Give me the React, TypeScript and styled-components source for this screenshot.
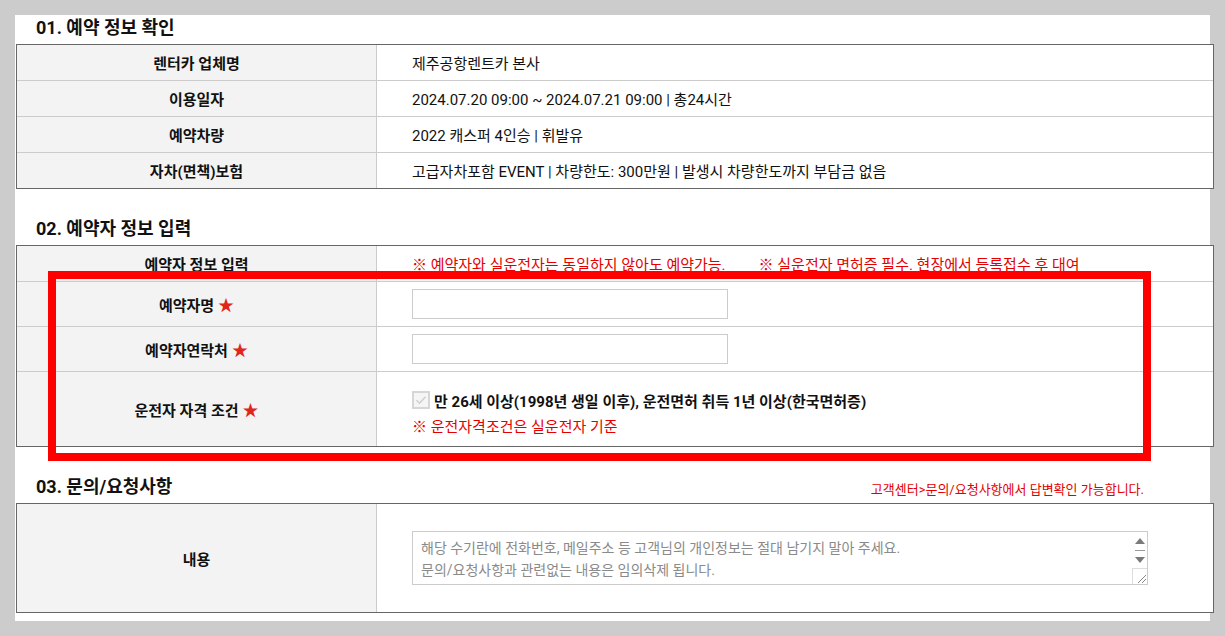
import styled, { createGlobalStyle } from 'styled-components';

const GlobalStyle = createGlobalStyle`
  html, body { margin: 0; padding: 0; }
  body {
    background: #cccccc;
    padding: 15px;
    font-family: Roboto, "Noto Sans CJK KR", sans-serif;
    color: #111;
  }
  * { box-sizing: border-box; }
`;

const Page = styled.div`
  position: relative;
  background: #fff;
  padding-bottom: 8px;
`;

const Section = styled.section`
  & + & { margin-top: 27px; }
`;

const TitleRow = styled.div`
  display: flex;
  align-items: center;
  justify-content: space-between;
  height: 25px;
  margin-bottom: 4px;
  padding: 0 66px 0 21px;
`;

const Title = styled.h2`
  margin: 0;
  font-size: 18px;
  font-weight: 700;
  line-height: 25px;
  color: #111;
`;

const Notice = styled.span`
  font-size: 13px;
  color: #e50000;
  padding-top: 4px;
`;

const Board = styled.div`
  width: 1198px;
  margin-left: 1px;
  border: 1px solid #666;
  background: #fff;
`;

const Row = styled.div<{ $h: number }>`
  display: grid;
  grid-template-columns: 360px 1fr;
  height: ${p => p.$h}px;
  box-sizing: content-box;
  & + & { border-top: 1px solid #ccc; }
`;

const Head = styled.div`
  display: flex;
  align-items: center;
  justify-content: center;
  background: #f3f3f3;
  border-right: 1px solid #ccc;
  font-size: 15px;
  font-weight: 700;
  color: #111;
`;

const Cell = styled.div<{ $top?: number }>`
  display: flex;
  flex-direction: ${p => (p.$top ? 'column' : 'row')};
  align-items: ${p => (p.$top ? 'flex-start' : 'center')};
  padding-left: 35px;
  padding-top: ${p => p.$top ?? 0}px;
  font-size: 15px;
  color: #111;
`;

const Star = styled.span`
  color: #e0261c;
  font-size: 16px;
  margin-left: 4px;
`;

const Red = styled.span<{ $gap?: number }>`
  color: #e50000;
  font-size: 15px;
  margin-left: ${p => p.$gap ?? 0}px;
`;

const TextInput = styled.input`
  width: 316px;
  height: 30px;
  border: 1px solid #ccc;
  padding: 0 8px;
  font: inherit;
  outline: none;
`;

const CheckLine = styled.label`
  display: flex;
  align-items: center;
  height: 20px;
  font-size: 15px;
  font-weight: 700;
  color: #111;
`;

const Box = styled.span`
  display: inline-flex;
  align-items: center;
  justify-content: center;
  width: 18px;
  height: 18px;
  margin-right: 4px;
  border: 2px solid #d6d6d6;
  background: #f5f5f5;
`;

const NoteLine = styled.div`
  margin-top: 7px;
  line-height: 20px;
`;

const AreaWrap = styled.div`
  position: relative;
  width: 736px;
  height: 54px;
`;

const Area = styled.textarea`
  width: 100%;
  height: 100%;
  border: 1px solid #ccc;
  padding: 5px 24px 5px 8px;
  font-family: inherit;
  font-size: 14px;
  line-height: 22px;
  resize: none;
  overflow: hidden;
  outline: none;
  &::placeholder { color: #8a8a8a; }
`;

const Scroll = styled.div`
  position: absolute;
  top: 1px;
  right: 1px;
  bottom: 1px;
  width: 15px;
  display: flex;
  flex-direction: column;
  align-items: center;
  background: #fff;
`;

const Arrow = styled.span<{ $down?: boolean }>`
  width: 0;
  height: 0;
  margin-top: 6px;
  border-left: 5px solid transparent;
  border-right: 5px solid transparent;
  ${p => (p.$down ? 'border-top: 6px solid #7a7a7a;' : 'border-bottom: 6px solid #7a7a7a;')}
`;

const Bar = styled.span`
  width: 10px;
  height: 1px;
  margin-top: 6px;
  background: #999;
`;

const Grip = styled.span`
  margin-top: auto;
  width: 15px;
  height: 16px;
  border-left: 1px solid #ddd;
  border-top: 1px solid #ddd;
  display: flex;
`;

const Highlight = styled.div`
  position: absolute;
  left: 33px;
  top: 256px;
  width: 1103px;
  height: 190px;
  border: 8px solid #ff0000;
  pointer-events: none;
`;

const confirmRows = [
  ['렌터카 업체명', '제주공항렌트카 본사'],
  ['이용일자', '2024.07.20 09:00 ~ 2024.07.21 09:00 | 총24시간'],
  ['예약차량', '2022 캐스퍼 4인승 | 휘발유'],
  ['자차(면책)보험', '고급자차포함 EVENT | 차량한도: 300만원 | 발생시 차량한도까지 부담금 없음'],
];

export default function App() {
  return (
    <>
      <GlobalStyle />
      <Page>
        <Section>
          <TitleRow>
            <Title>01. 예약 정보 확인</Title>
          </TitleRow>
          <Board>
            {confirmRows.map(([k, v]) => (
              <Row $h={35} key={k}>
                <Head>{k}</Head>
                <Cell>{v}</Cell>
              </Row>
            ))}
          </Board>
        </Section>

        <Section>
          <TitleRow>
            <Title>02. 예약자 정보 입력</Title>
          </TitleRow>
          <Board>
            <Row $h={35}>
              <Head>예약자 정보 입력</Head>
              <Cell>
                <Red>※ 예약자와 실운전자는 동일하지 않아도 예약가능.</Red>
                <Red $gap={33}>※ 실운전자 면허증 필수. 현장에서 등록접수 후 대여</Red>
              </Cell>
            </Row>
            <Row $h={44}>
              <Head>예약자명<Star>★</Star></Head>
              <Cell><TextInput type="text" /></Cell>
            </Row>
            <Row $h={44}>
              <Head>예약자연락처<Star>★</Star></Head>
              <Cell><TextInput type="text" /></Cell>
            </Row>
            <Row $h={74}>
              <Head>운전자 자격 조건<Star>★</Star></Head>
              <Cell $top={18}>
                <CheckLine>
                  <Box>
                    <svg width="12" height="10" viewBox="0 0 12 10">
                      <path d="M1.5 5.2 L4.6 8.2 L10.5 1.8" fill="none" stroke="#cfcfcf" strokeWidth="1.6" />
                    </svg>
                  </Box>
                  만 26세 이상(1998년 생일 이후), 운전면허 취득 1년 이상(한국면허증)
                </CheckLine>
                <NoteLine><Red>※ 운전자격조건은 실운전자 기준</Red></NoteLine>
              </Cell>
            </Row>
          </Board>
        </Section>

        <Section>
          <TitleRow>
            <Title>03. 문의/요청사항</Title>
            <Notice>고객센터&gt;문의/요청사항에서 답변확인 가능합니다.</Notice>
          </TitleRow>
          <Board>
            <Row $h={108}>
              <Head>내용</Head>
              <Cell>
                <AreaWrap>
                  <Area placeholder={'해당 수기란에 전화번호, 메일주소 등 고객님의 개인정보는 절대 남기지 말아 주세요.\n문의/요청사항과 관련없는 내용은 임의삭제 됩니다.'} />
                  <Scroll>
                    <Arrow />
                    <Bar />
                    <Arrow $down />
                    <Grip>
                      <svg width="14" height="15" viewBox="0 0 14 15">
                        <path d="M13 6 L5 14 M13 10 L9 14" stroke="#888" strokeWidth="1" />
                      </svg>
                    </Grip>
                  </Scroll>
                </AreaWrap>
              </Cell>
            </Row>
          </Board>
        </Section>

        <Highlight />
      </Page>
    </>
  );
}
